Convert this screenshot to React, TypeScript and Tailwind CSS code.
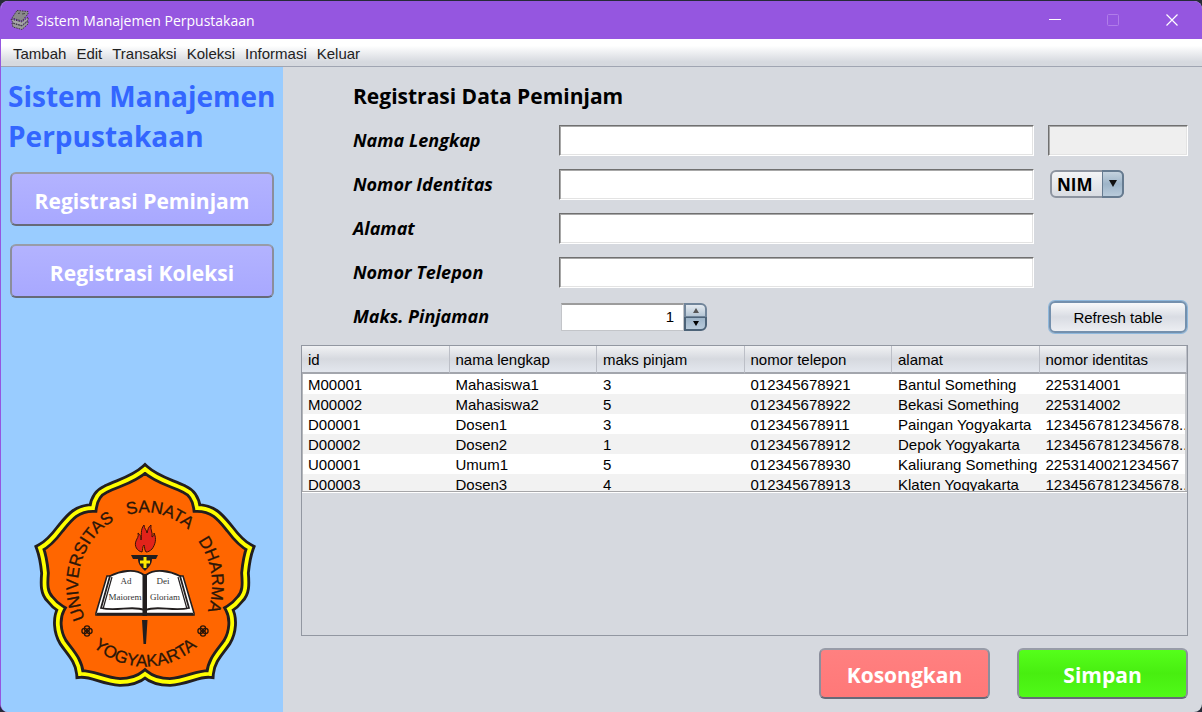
import React from "react";

const menus = ["Tambah", "Edit", "Transaksi", "Koleksi", "Informasi", "Keluar"];

const columns = ["id", "nama lengkap", "maks pinjam", "nomor telepon", "alamat", "nomor identitas"];

const rows = [
  ["M00001", "Mahasiswa1", "3", "012345678921", "Bantul Something", "225314001"],
  ["M00002", "Mahasiswa2", "5", "012345678922", "Bekasi Something", "225314002"],
  ["D00001", "Dosen1", "3", "012345678911", "Paingan Yogyakarta", "1234567812345678.."],
  ["D00002", "Dosen2", "1", "012345678912", "Depok Yogyakarta", "1234567812345678.."],
  ["U00001", "Umum1", "5", "012345678930", "Kaliurang Something", "2253140021234567"],
  ["D00003", "Dosen3", "4", "012345678913", "Klaten Yogyakarta", "1234567812345678.."],
];

const fieldClass =
  "h-[31px] w-full border border-t-[#707070] border-l-[#707070] border-r-[#ffffff] border-b-[#ffffff] px-1 outline-none shadow-[inset_1px_1px_0_#a8a8a8,inset_-1px_-1px_0_#e3e3e3]";
const labelClass = "text-[18px] leading-[30px] font-bold italic text-black font-['Open_Sans','Noto_Sans',sans-serif]";
const bigButton =
  "rounded-[6px] border-2 border-t-[#989ca8] border-x-[#8b8e9c] border-b-[#666a78] pt-[5px] text-[21px] font-bold text-white font-['Open_Sans','Noto_Sans',sans-serif]";

function BooksIcon() {
  return (
    <svg width="20" height="22" viewBox="0 0 20 22" aria-hidden="true">
      <g stroke="#3b3b3b" strokeWidth="1" strokeDasharray="1.5 1">
        <path d="M2 14 L3 18 L12 20.500 L18 15 V12 L12 17 Z" fill="#9a9a9a" />
        <path d="M1 10 L3 14 L12 16.500 L18 11 V8 L12 13 Z" fill="#a6a6a6" />
        <path d="M7 1.500 L18 2.500 V5 L12 12 L2 9 Z" fill="#8a8a8a" />
      </g>
      <path d="M8 4.500 L10 4 M12 5 L15 4.500" stroke="#444" strokeWidth="1" />
    </svg>
  );
}

const crestHalf =
  "M145 469 C133 480 118 483 106 489 C97 493 94 500 93 508 C76 508 69 518 60 529 C54 537 48 544 40 548 C43 556 44 563 45 573 C44 585 44 593 50 599 C53 603 56 606 61 609 C56 618 57 632 63 642 C69 651 79 660 80 674 C92 673 103 681 120 682 C130 682 139 679 145 674";
const crestFull =
  crestHalf +
  " C151 679 160 682 170 682 C187 681 198 673 210 674 C211 660 221 651 227 642 C233 632 234 618 229 609 C234 606 237 603 240 599 C246 593 246 585 245 573 C246 563 247 556 250 548 C242 544 236 537 230 529 C221 518 214 508 197 508 C196 500 193 493 184 489 C172 483 157 480 145 469 Z";

function Rosette({ x, y }: { x: number; y: number }) {
  return (
    <g fill="none" stroke="#2b1608" strokeWidth="1.3">
      <circle cx={x} cy={y - 2.5} r="2.6" />
      <circle cx={x - 2.5} cy={y} r="2.6" />
      <circle cx={x + 2.5} cy={y} r="2.6" />
      <circle cx={x} cy={y + 2.5} r="2.6" />
    </g>
  );
}

function Crest() {
  return (
    <svg
      className="mt-auto ml-[22px] block w-[226px]"
      viewBox="32 460 226 230"
      role="img"
      aria-label="Universitas Sanata Dharma Yogyakarta"
    >
      <defs>
        <path id="arc-top" d="M87 622 A67 73 0 1 1 203 622" />
        <path id="arc-bottom" d="M69 602 A77 77 0 0 0 221 602" />
      </defs>
      <path d={crestFull} fill="#ff6600" stroke="#221e1f" strokeWidth="9.5" strokeMiterlimit="6" />
      <path d={crestFull} fill="none" stroke="#ffff00" strokeWidth="3.8" />
      <g className="font-['Liberation_Sans',sans-serif] text-[17px]" fill="#2b1608" stroke="#2b1608" strokeWidth="0.3">
        <text>
          <textPath href="#arc-top" startOffset="4">UNIVERSITAS</textPath>
        </text>
        <text>
          <textPath href="#arc-top" startOffset="130">SANATA</textPath>
        </text>
        <text>
          <textPath href="#arc-top" startOffset="210">DHARMA</textPath>
        </text>
        <text textAnchor="middle">
          <textPath href="#arc-bottom" startOffset="50%">YOGYAKARTA</textPath>
        </text>
      </g>
      <Rosette x={87} y={631} />
      <Rosette x={203} y={631} />
      <path
        d="M142 552 C137 551 134 546 136 541 C137 538 139 537 138 533 C141 535 141 538 141 540 C142 535 140 530 144 525 C144 529 147 530 147 533 C148 530 148 527 151 525 C150 530 153 532 152 537 C154 536 154 535 154 533 C157 539 155 545 152 549 C150 551 148 552 146 552 C144 549 145 547 144 545 C142 547 143 550 142 552 Z"
        fill="#e2231a"
        stroke="#3a1208"
        strokeWidth="1"
      />
      <path d="M131 555 H158 L156 559 H152 C152 564 149 567 145 571 C141 567 138 564 138 559 H133 Z" fill="#221e1f" />
      <path d="M140 562 H150 M145 557 V568" stroke="#ffe800" strokeWidth="3" />
      <path d="M107 576 L96 613 V615 H194 V613 L183 576 Z" fill="#fff" stroke="#221e1f" strokeWidth="1.6" />
      <path
        d="M110 576 C120 571 135 568 144 575 V610 C133 605 116 612 101 608 Z M180 576 C170 571 155 568 146 575 V610 C157 605 174 612 189 608 Z"
        fill="#fff"
        stroke="#221e1f"
        strokeWidth="1.8"
      />
      <path d="M97 614 H193" stroke="#221e1f" strokeWidth="2.4" />
      <path d="M112 577 L103 609 M178 577 L187 609" stroke="#221e1f" strokeWidth="1.2" />
      <path d="M142.500 574 H147 V616 H142.500 Z M142 620 H147.500 L146 644 H143.500 Z" fill="#221e1f" />
      <g className="font-['Liberation_Serif',serif] text-[9px]" fill="#333" textAnchor="middle">
        <text x="126" y="584">Ad</text>
        <text x="125" y="600">Maiorem</text>
        <text x="163" y="584">Dei</text>
        <text x="165" y="600">Gloriam</text>
      </g>
    </svg>
  );
}

export default function App() {
  return (
    <div className="flex min-h-screen bg-[#262b38] pt-px">
      <div className="flex flex-1 flex-col overflow-hidden rounded-lg border-l border-[#9556e0] bg-[#d6d9df] font-['Liberation_Sans',Arial,sans-serif] text-black">
        <header className="flex h-[38px] items-center bg-[#9556e0] pl-[9px] text-white">
          <BooksIcon />
          <h1 className="ml-[6px] flex-1 text-[14px] font-['Open_Sans','Noto_Sans',sans-serif]">Sistem Manajemen Perpustakaan</h1>
          <button aria-label="Minimize" className="flex h-full w-[58px] items-center justify-center">
            <svg width="12" height="12" viewBox="0 0 12 12"><path d="M0 5.500 H12" stroke="#fff" /></svg>
          </button>
          <button aria-label="Maximize" disabled className="flex h-full w-[58px] items-center justify-center">
            <svg width="12" height="12" viewBox="0 0 12 12"><rect x="0.500" y="0.500" width="11" height="11" rx="1" fill="none" stroke="#b07de9" /></svg>
          </button>
          <button aria-label="Close" className="flex h-full w-[60px] items-center justify-center">
            <svg width="12" height="12" viewBox="0 0 12 12"><path d="M0.500 0.500 L11.500 11.500 M11.500 0.500 L0.500 11.500" stroke="#fff" strokeWidth="1.200" /></svg>
          </button>
        </header>

        <nav className="flex h-7 items-center gap-[10px] border-b border-[#a0a5b2] bg-linear-to-b from-white from-25% to-[#d6d9df] to-85% pt-[3px] pl-3 text-[15px]">
          {menus.map((m) => (
            <button key={m} className="text-[#222]">{m}</button>
          ))}
        </nav>

        <div className="flex flex-1">
          <aside className="flex w-[282px] shrink-0 flex-col bg-[#99ccff] px-[9px] pt-[9px] pb-[22px]">
            <h2 className="-ml-[2px] text-[28px] leading-10 font-bold whitespace-nowrap text-[#3366ff] font-['Open_Sans','Noto_Sans',sans-serif]">
              Sistem Manajemen
              <br />
              Perpustakaan
            </h2>
            <button className={`${bigButton} mt-4 h-[54px] bg-linear-to-b from-[#b3b3ff] to-[#a8a8ff]`}>
              Registrasi Peminjam
            </button>
            <button className={`${bigButton} mt-[18px] h-[54px] bg-linear-to-b from-[#b3b3ff] to-[#a8a8ff]`}>
              Registrasi Koleksi
            </button>
            <Crest />
          </aside>

          <main className="flex min-w-0 flex-1 flex-col pt-[13px] pr-[14px] pb-[13px] pl-[18px]">
            <form className="pl-[52px]" onSubmit={(e) => e.preventDefault()}>
              <h2 className="text-[21px] leading-8 font-bold font-['Open_Sans','Noto_Sans',sans-serif]">Registrasi Data Peminjam</h2>
              <div className="mt-[13px] grid auto-rows-[32px] grid-cols-[192px_1fr_140px] gap-x-[14px] gap-y-3">
                <label htmlFor="nama" className={labelClass}>Nama Lengkap</label>
                <input id="nama" className={`${fieldClass} bg-white`} />
                <input aria-label="ID" readOnly className={`${fieldClass} bg-[#efefef]`} />

                <label htmlFor="identitas" className={labelClass}>Nomor Identitas</label>
                <input id="identitas" className={`${fieldClass} bg-white`} />
                <div className="relative ml-[2px] h-7 w-[74px]">
                  <select
                    aria-label="Jenis identitas"
                    className="mt-px h-full w-full appearance-none rounded-[6px] border-2 border-[#8d94a0] bg-linear-to-b from-[#f3f4f6] to-[#d9dce2] pl-[5px] text-[17px] leading-none font-bold font-['Open_Sans','Noto_Sans',sans-serif]"
                  >
                    <option>NIM</option>
                  </select>
                  <span className="pointer-events-none absolute top-px right-0 flex h-7 w-[22px] items-center justify-center rounded-r-[6px] border-2 border-l border-[#667b90] bg-linear-to-b from-[#c5d3df] via-[#9db4c8] to-[#b9cbdb] pb-[2px]">
                    <svg width="8" height="7" viewBox="0 0 8 7"><path d="M0 0 H8 L4 7 Z" fill="#111" /></svg>
                  </span>
                </div>

                <label htmlFor="alamat" className={labelClass}>Alamat</label>
                <input id="alamat" className={`${fieldClass} bg-white`} />
                <span />

                <label htmlFor="telepon" className={labelClass}>Nomor Telepon</label>
                <input id="telepon" className={`${fieldClass} bg-white`} />
                <span />

                <label htmlFor="maks" className={labelClass}>Maks. Pinjaman</label>
                <div className="ml-[2px] flex h-7 items-stretch self-center">
                  <input
                    id="maks"
                    defaultValue="1"
                    className="w-[123px] border border-t-2 border-[#c3c5c9] border-t-[#9c9c9c] bg-white pr-[9px] text-right text-[15px] outline-none"
                  />
                  <div className="flex w-[23px] flex-col">
                    <button aria-label="Tambah" className="flex flex-1 items-center justify-center rounded-tr-[6px] border-2 border-b border-[#71859a] bg-linear-to-b from-[#e4eaf0] to-[#b5c6d5]">
                      <svg width="6" height="5" viewBox="0 0 6 5"><path d="M0 5 H6 L3 0 Z" fill="#555" /></svg>
                    </button>
                    <button aria-label="Kurangi" className="flex flex-1 items-center justify-center rounded-br-[6px] border-2 border-t border-[#4d6378] bg-linear-to-b from-[#9db4c8] to-[#b9cbdb]">
                      <svg width="6" height="5" viewBox="0 0 6 5"><path d="M0 0 H6 L3 5 Z" fill="#000" /></svg>
                    </button>
                  </div>
                </div>
                <button className="mx-px rounded-[6px] border-2 border-[#7490ad] bg-linear-to-b from-[#f8f9fa] via-[#d9dce3] to-[#eceef2] pt-[3px] text-[15px] shadow-[0_0_0_1px_#8fb8dc]">
                  Refresh table
                </button>
              </div>
            </form>

            <div className="mt-3 flex-1 border border-[#9297a1]">
              <div className="h-[147px] overflow-hidden border-b border-white">
                <div className="h-[146px] overflow-hidden border-b border-[#a6a6a8]">
                  <table className="w-full table-fixed border-separate border-spacing-0 text-[15px]">
                    <thead>
                      <tr>
                        {columns.map((c) => (
                          <th
                            key={c}
                            className="h-7 border-r border-b-2 border-r-[#bcbfc7] border-b-[#a3a6ad] bg-linear-to-b from-[#f1f2f4] via-[#d6d9df] to-[#e3e7ee] px-[6px] pt-[3px] text-left font-normal"
                          >
                            {c}
                          </th>
                        ))}
                      </tr>
                    </thead>
                    <tbody>
                      {rows.map((r) => (
                        <tr key={r[0]} className="bg-white even:bg-[#f2f2f2]">
                          {r.map((v, i) => (
                            <td
                              key={i}
                              className="h-5 overflow-hidden px-[6px] pt-[2px] leading-[18px] whitespace-nowrap first:border-l first:border-[#b5b7bb] first:pl-[5px] last:border-r-2 last:border-[#c9cbcf] last:pr-0"
                            >
                              {v}
                            </td>
                          ))}
                        </tr>
                      ))}
                    </tbody>
                  </table>
                </div>
              </div>
            </div>

            <div className="mt-3 flex justify-end gap-[27px]">
              <button className={`${bigButton} h-[51px] w-[171px] bg-linear-to-b from-[#ff8080] to-[#ff7878]`}>Kosongkan</button>
              <button className={`${bigButton} h-[51px] w-[171px] bg-linear-to-b from-[#55ff1a] via-[#48ee10] to-[#50fa18]`}>Simpan</button>
            </div>
          </main>
        </div>
      </div>
    </div>
  );
}
